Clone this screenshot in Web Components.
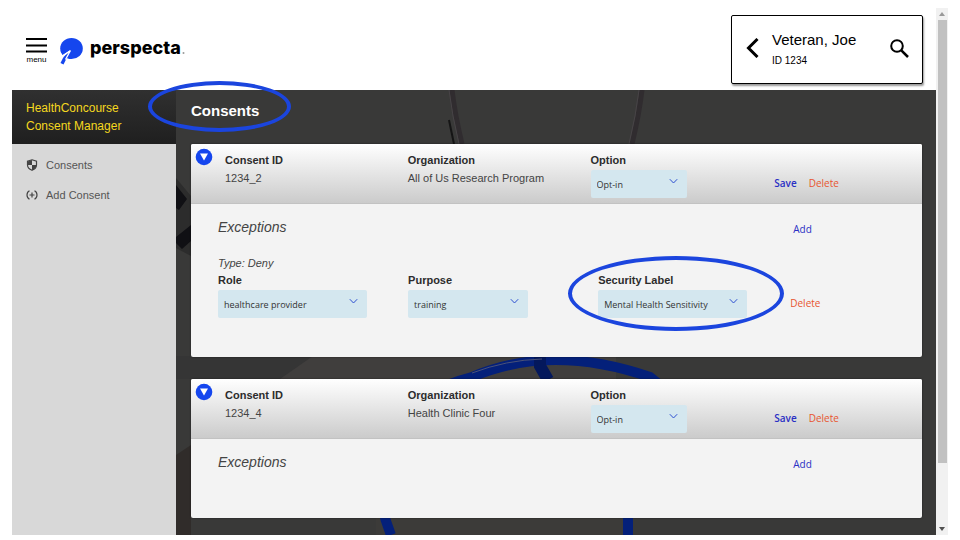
<!DOCTYPE html>
<html lang="en">
<head>
<meta charset="utf-8">
<title>HealthConcourse Consent Manager</title>
<style>
  html, body { height: 100%; }
  body { margin: 0; background: #fff; font-family: "Liberation Sans", Arial, sans-serif; font-size: 11px; color: #444; }
</style>
</head>
<body>
<consent-app>
  <app-header slot="header"></app-header>
  <side-nav slot="nav"></side-nav>
  <consent-card consent-id="1234_2" organization="All of Us Research Program">
    <exception-rule type="Deny" role-name="healthcare provider" purpose="training" security="Mental Health Sensitivity"></exception-rule>
  </consent-card>
  <consent-card consent-id="1234_4" organization="Health Clinic Four"></consent-card>
  <scroll-rail slot="rail"></scroll-rail>
</consent-app>

<script>
class BaseElement extends HTMLElement {
  connectedCallback() {
    if (this.shadowRoot) return;
    this.attachShadow({ mode: "open" }).innerHTML =
      `<style>*, ::before, ::after { box-sizing: border-box; }
       button { font: inherit; color: inherit; background: none; border: 0; padding: 0; margin: 0; cursor: pointer; }
       svg { display: block; }</style>` + this.render();
  }
  attr(name) { return this.getAttribute(name) || ""; }
}

customElements.define("consent-app", class extends BaseElement {
  render() {
    return `
    <style>
      :host { display: flex; box-sizing: border-box; min-height: 100vh; padding: 8px 12px 5px; }
      .app { flex: 1; min-width: 0; display: flex; flex-direction: column; }
      .row { flex: 1; display: flex; }
      main { flex: 1; min-width: 0; position: relative; background: #393938; padding: 0 14px 17px 15px; }
      photo-backdrop { position: absolute; inset: 0; }
      .content { position: relative; display: flex; flex-direction: column; }
      h1 { margin: 0; height: 54px; padding-bottom: 14px; display: flex; align-items: center; color: #fff; font-size: 15px; }
      .title { position: relative; }
      ring-mark { position: absolute; inset: -21px -32px -13px -43px; }
      .cards { display: flex; flex-direction: column; gap: 22px; }
    </style>
    <div class="app">
      <slot name="header"></slot>
      <div class="row">
        <slot name="nav"></slot>
        <main>
          <photo-backdrop></photo-backdrop>
          <div class="content">
            <h1><span class="title">Consents<ring-mark></ring-mark></span></h1>
            <div class="cards"><slot></slot></div>
          </div>
        </main>
      </div>
    </div>
    <slot name="rail"></slot>`;
  }
});

customElements.define("app-header", class extends BaseElement {
  render() {
    return `
    <style>
      :host { display: block; }
      header { display: flex; justify-content: space-between; height: 82px; padding: 7px 13px 6px 14px; }
      .brand { display: flex; align-items: flex-start; padding-top: 23px; }
      .menu { font-size: 8px; line-height: 8px; color: #000; }
      .menu svg { margin: 0 auto 3px; }
      .logo { margin-left: 12px; }
      .word { margin-left: 7px; font: 800 18px/20px Inter, sans-serif; color: #000; }
      patient-box { align-self: stretch; }
    </style>
    <header>
      <div class="brand">
        <button class="menu"><svg width="21" height="15" viewBox="0 0 21 15"><path d="M0 1h21M0 7.500h21M0 13.500h21" stroke="#000" stroke-width="2"/></svg>menu</button>
        <svg class="logo" width="24" height="27" viewBox="0 0 24 27">
          <ellipse cx="12.500" cy="10.500" rx="11.300" ry="10.500" fill="#1546ee"/>
          <path d="M11 12.500 2 18V23L9.500 22 7.500 20.500Z" fill="#fff"/>
          <path d="M10.800 13.500Q6 17 4 20L1.500 25 4.500 26.500 7.500 20.500Z" fill="#1546ee"/>
          <path d="M11.500 12.500 6.500 21.500M11.500 12.500 3.500 18" stroke="#fff" stroke-width="1.300"/>
        </svg>
        <span class="word">perspecta</span>
        <svg width="4" height="18" viewBox="0 0 4 18"><circle cx="2.500" cy="15" r="1" fill="#999"/></svg>
      </div>
      <patient-box name="Veteran, Joe" patient-id="1234"></patient-box>
    </header>`;
  }
});

customElements.define("patient-box", class extends BaseElement {
  render() {
    return `
    <style>
      :host { display: flex; align-items: center; box-sizing: border-box; width: 192px; padding: 0 13px 3px 14px;
        background: #fff; color: #000; border: 1px solid #000; border-radius: 2px; box-shadow: 1px 2px 2px #0006; }
      .who { flex: 1; padding-left: 13px; }
      .name { font-size: 15px; line-height: 20px; }
      .id { font-size: 10px; line-height: 12px; margin-top: 5px; }
    </style>
    <button aria-label="Back"><svg width="13" height="20" viewBox="0 0 13 20"><path d="M11.500 1 2.500 10 11.500 19" fill="none" stroke="#000" stroke-width="3"/></svg></button>
    <div class="who"><div class="name">${this.attr("name")}</div><div class="id">ID ${this.attr("patient-id")}</div></div>
    <button aria-label="Search"><svg width="19" height="19" viewBox="0 0 19 19"><circle cx="7" cy="7" r="5.800" fill="none" stroke="#000" stroke-width="2"/><path d="M11.300 11.300 18 18" stroke="#000" stroke-width="2.500"/></svg></button>`;
  }
});

customElements.define("side-nav", class extends BaseElement {
  render() {
    return `
    <style>
      :host { display: block; width: 164px; background: #d8d8d8; }
      .head { height: 54px; padding: 9px 14px; background: linear-gradient(#303030, #1f1f1f); color: #f5d81f; font-size: 12px; line-height: 18px; }
      nav { display: flex; flex-direction: column; gap: 12px; padding: 12px 14px; }
      a { display: flex; align-items: center; gap: 8px; line-height: 18px; color: #555; text-decoration: none; }
    </style>
    <div class="head">HealthConcourse<br>Consent Manager</div>
    <nav>
      <a href="#consents"><svg width="12" height="12" viewBox="0 0 12 12"><path d="M6 .8 10.500 2.200V6Q10.500 9.500 6 11.300 1.500 9.500 1.500 6V2.200Z" fill="#d8d8d8" stroke="#444" stroke-width="1.200"/><path d="M6 1V6H1.500V2.500ZM6 6H10.500Q10 9.500 6 11.300Z" fill="#444"/></svg>Consents</a>
      <a href="#add"><svg width="12" height="12" viewBox="0 0 12 12"><path d="M3.500 1.800Q1 3 1 6T3.500 10.200M8.500 1.800Q11 3 11 6T8.500 10.200M3.500 6H8.500M6 3.500V8.500" fill="none" stroke="#444" stroke-width="1.200"/></svg>Add Consent</a>
    </nav>`;
  }
});

customElements.define("consent-card", class extends BaseElement {
  render() {
    return `
    <style>
      :host { display: block; background: #f3f3f3; border-radius: 2px; overflow: hidden; box-shadow: 0 0 2px #0008; }
      .top { position: relative; height: 60px; display: grid; grid-template-columns: repeat(4, 1fr); background: linear-gradient(#fff, #cbcbcb); border-bottom: 1px solid #c2c2c2; }
      .top > * { padding: 7px 0 0 34px; line-height: 18px; }
      .top > .toggle { position: absolute; left: 4px; top: 4px; padding: 0; }
      b { display: block; color: #2c2c2c; }
      .acts { display: flex; align-items: flex-start; gap: 12px; }
      .top > .acts { padding: 31px 0 0 35px; }
      .acts, .add { font-family: "Open Sans", sans-serif; font-size: 10px; line-height: 16px; color: #2a2fc4; }
      .save { font-weight: 600; }
      .delete { color: #e8552e; }
      .body { min-height: 79px; }
      .line { display: grid; grid-template-columns: 27% 27% 27% 1fr; padding: 11px 0 3px 27px; align-items: center; }
      h2 { grid-column: span 3; margin: 0; padding-bottom: 1px; font-size: 14px; line-height: 24px; font-weight: 400; font-style: italic; color: #444; }
      .add { justify-self: start; padding: 5px 5px 3px; }
    </style>
    <div class="top">
      <button class="toggle" aria-label="Collapse"><svg width="18" height="18" viewBox="0 0 18 18"><circle cx="9" cy="9" r="8.300" fill="#1546ee"/><path d="M5 5.500H13L9 12.500Z" fill="#fff"/></svg></button>
      <div><b>Consent ID</b>${this.attr("consent-id")}</div>
      <div><b>Organization</b>${this.attr("organization")}</div>
      <div><pick-list label="Option" value="Opt-in" size="96"></pick-list></div>
      <div class="acts"><button class="save">Save</button><button class="delete">Delete</button></div>
    </div>
    <div class="body">
      <div class="line"><h2>Exceptions</h2><button class="add">Add</button></div>
      <slot></slot>
    </div>`;
  }
});

customElements.define("exception-rule", class extends BaseElement {
  render() {
    return `
    <style>
      :host { display: block; padding: 12px 0 39px 27px; }
      em { display: block; line-height: 16px; color: #444; }
      .cols { display: grid; grid-template-columns: 27% 27% 27% 1fr; }
      .marked { position: relative; justify-self: start; }
      ring-mark { position: absolute; inset: -15px -37px -13px -30px; }
      .delete { justify-self: start; align-self: start; padding: 23px 2px 0; font-family: "Open Sans", sans-serif; font-size: 10px; line-height: 18px; color: #e8552e; }
    </style>
    <em>Type: ${this.attr("type")}</em>
    <div class="cols">
      <pick-list label="Role" value="${this.attr("role-name")}" size="149"></pick-list>
      <pick-list label="Purpose" value="${this.attr("purpose")}" size="120"></pick-list>
      <div class="marked"><pick-list label="Security Label" value="${this.attr("security")}" size="149"></pick-list><ring-mark></ring-mark></div>
      <button class="delete">Delete</button>
    </div>`;
  }
});

customElements.define("pick-list", class extends BaseElement {
  render() {
    return `
    <style>
      :host { display: block; }
      label { display: block; font-weight: 700; line-height: 18px; padding-bottom: 1px; color: #2c2c2c; }
      .box { position: relative; width: ${this.attr("size")}px; max-width: 100%; }
      select { display: block; width: 100%; height: 28px; margin: 0; padding: 0 20px 0 6px; border: 0; border-radius: 2px; appearance: none;
        background: #d4e7ef; color: #333; font: 9px "Open Sans", sans-serif; }
      svg { position: absolute; right: 9px; top: 8px; pointer-events: none; }
    </style>
    <label for="s">${this.attr("label")}</label>
    <div class="box">
      <select id="s"><option>${this.attr("value")}</option></select>
      <svg width="9" height="7" viewBox="0 0 9 7"><path d="M.8 1.200 4.500 5 8.200 1.200" fill="none" stroke="#2e50d0"/></svg>
    </div>`;
  }
});

customElements.define("ring-mark", class extends BaseElement {
  render() {
    return `
    <style>
      :host { display: block; border: 4px solid #1b45de; border-radius: 50%; box-sizing: border-box; pointer-events: none; z-index: 2; }
    </style>`;
  }
});

customElements.define("scroll-rail", class extends BaseElement {
  render() {
    return `
    <style>
      :host { display: flex; flex-direction: column; width: 12px; background: #f1f1f1; }
      .end { height: 12px; display: grid; place-items: center; }
      .track { flex: 1; padding: 0 1px 0 2px; }
      .thumb { height: 88%; background: #c1c1c1; }
    </style>
    <div class="end"><svg width="6" height="4" viewBox="0 0 6 4"><path d="M0 4 3 0 6 4Z" fill="#999"/></svg></div>
    <div class="track"><div class="thumb"></div></div>
    <div class="end"><svg width="6" height="4" viewBox="0 0 6 4"><path d="M0 0H6L3 4Z" fill="#505050"/></svg></div>`;
  }
});

/* Darkened desk scene: stethoscope tubing, keyboard edge and paper. */
customElements.define("photo-backdrop", class extends BaseElement {
  render() {
    return `
    <style>:host { display: block; overflow: hidden; } svg { width: 100%; height: 100%; }</style>
    <svg viewBox="0 0 760 445" preserveAspectRatio="xMidYMid slice" aria-hidden="true">
      <rect width="760" height="445" fill="#393938"/>
      <path d="M0 88 15 106V166L0 158Z" fill="#2c2c2c"/>
      <path d="M0 95 11 109 3 120 0 118ZM0 147 15 135V151L6 159 0 153Z" fill="#101014"/>
      <path d="M60 289 132 266H440V289Z" fill="#403e3d"/>
      <path d="M0 266H137L104 289H0Z" fill="#353535"/>
      <path d="M0 365 15 355V445H0Z" fill="#302c2a"/>
      <path d="M200 428H450V445H200Z" fill="#3c3b39"/>
      <path d="M276 0Q279 25 286 54M466 0Q463 25 456 54" fill="none" stroke="#302c2f" stroke-width="5"/>
      <path d="M273 0Q276 25 283 54M463 0Q460 25 453 54" fill="none" stroke="#484447"/>
      <path d="M273 30 278 54" stroke="#151515" stroke-width="2"/>
      <path d="M215 445Q205 420 204 400Q205 310 296 287Q375 253 474 287Q545 340 452 405V445" fill="none" stroke="#04207a" stroke-width="10"/>
      <path d="M364 266V276L372 290" fill="none" stroke="#04185c" stroke-width="12"/>
      <path d="M296 283Q330 270 366 269" fill="none" stroke="#4b5278"/>
    </svg>`;
  }
});
</script>
</body>
</html>
